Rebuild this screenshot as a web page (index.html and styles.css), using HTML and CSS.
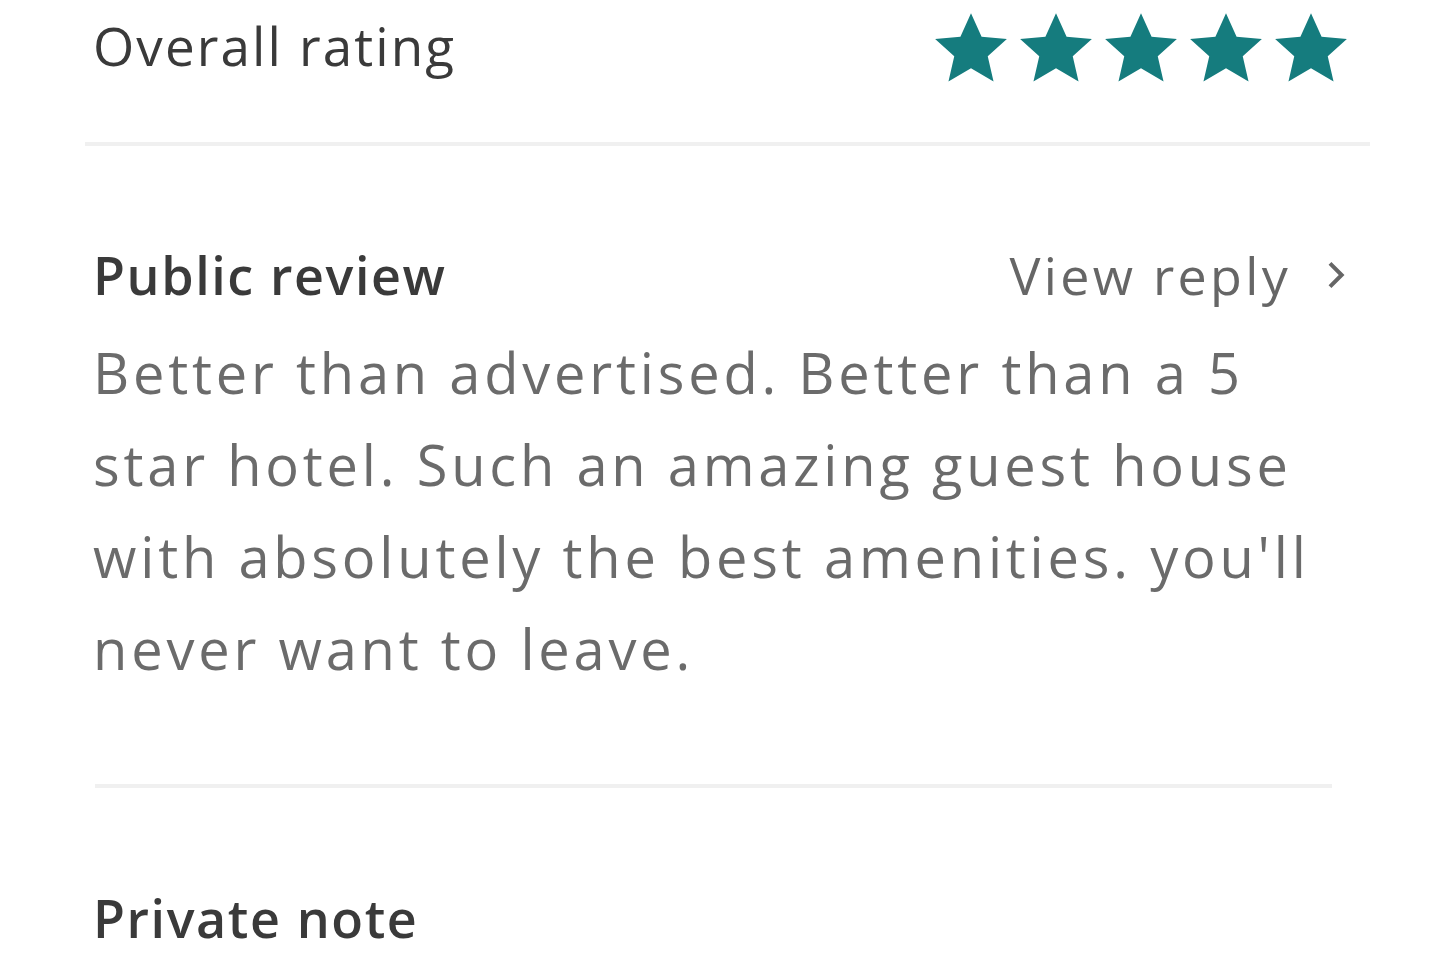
FILE: index.html
```html
<!DOCTYPE html>
<html lang="en">
<head>
  <meta charset="UTF-8">
  <title>Review</title>
  <link rel="stylesheet" href="styles.css">
</head>
<body>

  <div class="review-card">

    <!-- Overall rating -->
    <div class="rating-row">
      <div class="label">Overall rating</div>
      <div class="stars">
        <svg class="star" viewBox="0 0 24 24"><path d="M12 1.8l3.1 6.9 7.4.7-5.6 5 1.7 7.4L12 17.9l-6.6 3.9 1.7-7.4-5.6-5 7.4-.7z"/></svg>
        <svg class="star" viewBox="0 0 24 24"><path d="M12 1.8l3.1 6.9 7.4.7-5.6 5 1.7 7.4L12 17.9l-6.6 3.9 1.7-7.4-5.6-5 7.4-.7z"/></svg>
        <svg class="star" viewBox="0 0 24 24"><path d="M12 1.8l3.1 6.9 7.4.7-5.6 5 1.7 7.4L12 17.9l-6.6 3.9 1.7-7.4-5.6-5 7.4-.7z"/></svg>
        <svg class="star" viewBox="0 0 24 24"><path d="M12 1.8l3.1 6.9 7.4.7-5.6 5 1.7 7.4L12 17.9l-6.6 3.9 1.7-7.4-5.6-5 7.4-.7z"/></svg>
        <svg class="star" viewBox="0 0 24 24"><path d="M12 1.8l3.1 6.9 7.4.7-5.6 5 1.7 7.4L12 17.9l-6.6 3.9 1.7-7.4-5.6-5 7.4-.7z"/></svg>
      </div>
    </div>

    <hr class="divider wide">

    <!-- Public review -->
    <div class="section">
      <div class="section-head">
        <div class="title">Public review</div>
        <a class="view-reply" href="#">View reply
          <svg class="chevron" viewBox="0 0 12 24"><polyline points="3,5 10,12 3,19"/></svg>
        </a>
      </div>
      <p class="review-text">Better than advertised. Better than a 5 star hotel. Such an amazing guest house with absolutely the best amenities. you'll never want to leave.</p>
    </div>

    <hr class="divider">

    <!-- Private note -->
    <div class="section private">
      <div class="title">Private note</div>
    </div>

  </div>

</body>
</html>
```

FILE: styles.css
```css
body {
  font-family: "Open Sans", "Noto Sans", sans-serif;
  margin: 0;
  background-color: #ffffff;
  color: #333;
}

.review-card {
  padding: 0 93px;
}

/* Overall rating */
.rating-row {
  display: flex;
  justify-content: space-between;
  align-items: center;
  height: 96px;
}

.label {
  font-size: 53px;
  color: #3a3a3a;
  letter-spacing: 2.1px;
  margin-top: -6px;
}

.stars {
  display: flex;
  gap: 3px;
  margin-right: -5px;
}

.star {
  width: 82px;
  height: 82px;
  fill: #157c7e;
}

.divider {
  border: none;
  height: 4px;
  background-color: #f0f0f0;
  margin: 46px 15px 0 2px;
}

.divider.wide {
  margin: 46px -23px 0 -8px;
}

/* Sections */
.section {
  padding-top: 93px;
}

.section.private {
  padding-top: 98px;
}

.section-head {
  display: flex;
  justify-content: space-between;
  align-items: center;
}

.title {
  font-size: 52px;
  font-weight: 600;
  color: #3a3a3a;
  letter-spacing: 1.6px;
  line-height: 64px;
}

.view-reply {
  display: flex;
  align-items: center;
  gap: 34px;
  font-size: 52px;
  color: #666;
  text-decoration: none;
  letter-spacing: 3.3px;
  margin-right: 2px;
}

.chevron {
  width: 20px;
  height: 40px;
  fill: none;
  stroke: #666;
  stroke-width: 2.4;
}

.review-text {
  font-size: 56px;
  line-height: 92px;
  color: #6b6b6b;
  letter-spacing: 3.8px;
  margin: 16px 0 0;
  width: 1230px;
}

.section + .divider {
  margin-top: 90px;
}
```
